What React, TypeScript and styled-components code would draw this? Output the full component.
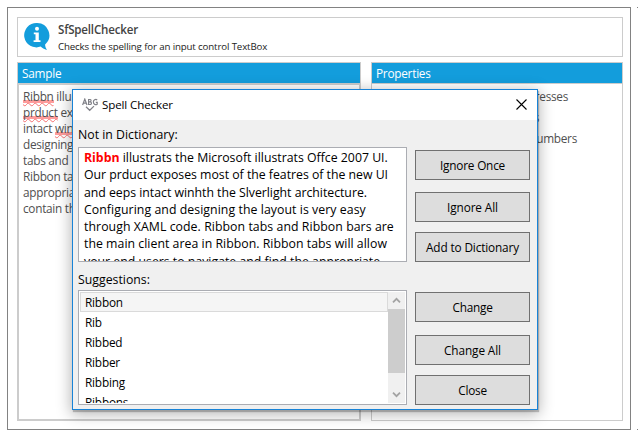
import React from 'react';
import styled, { createGlobalStyle } from 'styled-components';

const GlobalStyle = createGlobalStyle`
  * { box-sizing: border-box; }
  body { margin: 0; background: #fff; overflow: hidden; font-family: "Open Sans", "Noto Sans", sans-serif; }
`;

const Stage = styled.div`
  position: relative;
  width: 638px;
  height: 435px;
  padding: 7px 0 5px 7px;
  display: flex;
  gap: 6px;
  overflow: hidden;
`;

const AppWindow = styled.main`
  flex: none;
  width: 624px;
  height: 423px;
  border: 1px solid #828282;
  padding: 9px 7px 8px 9px;
  display: flex;
  flex-direction: column;
  gap: 5px;
`;

const NextWindow = styled.div`
  flex: 1;
  height: 423px;
  border: solid #828282;
  border-width: 1px 0;
`;

const Intro = styled.header`
  height: 40px;
  border: 1px solid #ccc;
  display: flex;
  padding: 4px 0 0 6px;
`;

const IntroText = styled.div`
  padding: 0 0 0 8px;
`;

const InfoIcon = styled.svg`
  width: 26px;
  height: 29px;
  flex: none;
`;

const Heading = styled.h1`
  margin: 0;
  font-size: 11.6px;
  line-height: 16px;
  font-weight: 600;
  letter-spacing: -0.2px;
  color: #444;
`;

const Caption = styled.p`
  margin: 1px 0 0;
  font-size: 9.7px;
  line-height: 15px;
  letter-spacing: -0.13px;
  color: #222;
`;

const Columns = styled.div`
  flex: 1;
  display: flex;
  gap: 10px;
`;

const Panel = styled.section<{ $width: number }>`
  width: ${p => p.$width}px;
  display: flex;
  flex-direction: column;
`;

const PanelTitle = styled.h2`
  margin: 0;
  height: 21px;
  border: 1px solid #ccc;
  border-bottom: 0;
  background: #139ddc;
  color: #fff;
  padding-left: 4px;
  font-size: 11.8px;
  font-weight: 400;
  line-height: 20px;
  letter-spacing: -0.25px;
`;

const PanelBody = styled.div<{ $edge: number }>`
  flex: 1;
  border: ${p => p.$edge}px solid #ccc;
  padding: ${p => (p.$edge === 2 ? 3 : 4)}px 4px;
  color: #505050;
  font-size: 11.8px;
  letter-spacing: -0.28px;
  line-height: 16px;
  white-space: pre;
`;

const Misspelt = styled.span`
  background: linear-gradient(#ff9c9c, #ff9c9c) 0 calc(100% - 1px) / 100% 3px no-repeat;
  text-decoration: underline wavy #f47070 1px;
  text-underline-offset: 1px;
  text-decoration-skip-ink: none;
`;

const BodyLine = styled.div`
  width: 51px;
`;

const OptionRow = styled.div`
  width: 206px;
  height: 21px;
  text-align: right;
`;

const OptionText = styled.span<{ $inset: number }>`
  margin-right: ${p => p.$inset}px;
`;

const Dialog = styled.div`
  position: absolute;
  left: 72px;
  top: 89px;
  width: 466px;
  height: 321px;
  border: 1px solid #1883d7;
  background: #f0f0f0;
  color: #000;
  box-shadow: 1px 2px 1px rgba(0, 0, 0, 0.22), 0 3px 14px 1px rgba(0, 0, 0, 0.3);
  display: flex;
  flex-direction: column;
`;

const TitleBar = styled.div`
  height: 30px;
  background: #fff;
  display: flex;
  align-items: center;
  padding: 0 10px 0 9px;
`;

const SpellIcon = styled.svg`
  width: 16px;
  height: 14px;
  margin: 0 4px 0 0;
`;

const Title = styled.span`
  flex: 1;
  margin-top: -1px;
  font-size: 11.6px;
  letter-spacing: -0.13px;
`;

const CloseIcon = styled.svg`
  width: 11px;
  height: 11px;
  margin-top: -2px;
`;

const DialogBody = styled.div`
  display: flex;
  gap: 8px;
  padding: 0 0 0 5px;
`;

const Fields = styled.div`
  width: 329px;
`;

const Label = styled.div<{ $height: number; $top: number }>`
  height: ${p => p.$height}px;
  padding-top: ${p => p.$top}px;
  line-height: 17px;
  font-size: 12.3px;
  white-space: nowrap;
`;

const TextArea = styled.div`
  height: 115px;
  border: 1px solid #abadb3;
  background: #fff;
  padding: 1px 5px 0;
  overflow: hidden;
`;

const TextLine = styled.div<{ $spacing: number }>`
  font-size: 12.3px;
  line-height: 17px;
  height: 17.25px;
  letter-spacing: ${p => p.$spacing}px;
  white-space: nowrap;
`;

const ErrorWord = styled.b`
  color: #f00;
  font-size: 12.3px;
`;

const SuggestionBox = styled.div`
  height: 115px;
  border: 1px solid #abadb3;
  background: #fff;
  padding: 1px;
  display: flex;
`;

const SuggestionList = styled.div`
  flex: 1;
  overflow: hidden;
`;

const Suggestion = styled.div<{ $selected?: boolean }>`
  height: ${p => (p.$selected ? 20 : 19.9)}px;
  padding-left: 4px;
  border: 1px solid ${p => (p.$selected ? '#dadada' : 'transparent')};
  background: ${p => (p.$selected ? '#f5f5f5' : 'transparent')};
  font-size: 11.8px;
  letter-spacing: -0.2px;
  line-height: 18px;
`;

const ScrollBar = styled.div`
  width: 17px;
  background: #f0f0f0;
  display: flex;
  flex-direction: column;
`;

const ScrollArrow = styled.svg`
  width: 17px;
  height: 17px;
`;

const ScrollThumb = styled.div`
  height: 64px;
  margin-bottom: auto;
  background: #cdcdcd;
`;

const Actions = styled.div`
  width: 115px;
  padding-top: 30px;
  display: flex;
  flex-direction: column;
`;

const ActionButton = styled.button<{ $after: number; $spacing: number }>`
  flex: none;
  height: 30px;
  margin: 0 0 ${p => p.$after}px;
  padding: 0;
  border: 1px solid #707070;
  background: #ddd;
  color: #000;
  font-family: inherit;
  font-size: 11.8px;
  letter-spacing: ${p => p.$spacing}px;
  line-height: 28px;
`;

const textLines: [string, number][] = [
  ['Our prduct exposes most of the featres of the new UI', -0.02],
  ['and eeps intact winhth the Slverlight architecture.', -0.025],
  ['Configuring and designing the layout is very easy', 0.06],
  ['through XAML code. Ribbon tabs and Ribbon bars are', 0.06],
  ['the main client area in Ribbon. Ribbon tabs will allow', 0.025],
  ['your end users to navigate and find the appropriate', 0],
];

const suggestions = ['Ribbon', 'Rib', 'Ribbed', 'Ribber', 'Ribbing', 'Ribbons'];

const actions: [string, number, number][] = [
  ['Ignore Once', 12, -0.2],
  ['Ignore All', 10, -0.1],
  ['Add to Dictionary', 30, -0.14],
  ['Change', 13, -0.24],
  ['Change All', 10, -0.1],
  ['Close', 0, -0.24],
];

export default function App() {
  return (
    <>
      <GlobalStyle />
      <Stage>
        <AppWindow>
          <Intro>
            <InfoIcon viewBox="0 0 26 29">
              <path d="M12.7 1a12.2 12.2 0 1 0 4 23.6c1.3 1.3 3.5 2.7 6.3 3.3-1.3-1.9-1.9-3.7-1.9-5.5A12.2 12.2 0 0 0 12.7 1z" fill="#139ddc" />
              <circle cx="13" cy="6.7" r="2" fill="#fff" />
              <path d="M9.8 10.5h5v7.7h1.7v1.8H9.6v-1.8h1.9v-5.9H9.8z" fill="#fff" />
            </InfoIcon>
            <IntroText>
              <Heading>SfSpellChecker</Heading>
              <Caption>Checks the spelling for an input control TextBox</Caption>
            </IntroText>
          </Intro>
          <Columns>
            <Panel $width={344}>
              <PanelTitle>Sample</PanelTitle>
              <PanelBody $edge={2}>
                <BodyLine><Misspelt>Ribbn</Misspelt> illu</BodyLine>
                <BodyLine><Misspelt>prduct</Misspelt> ex</BodyLine>
                <BodyLine>intact <Misspelt>win</Misspelt></BodyLine>
                <BodyLine>designing</BodyLine>
                <BodyLine>tabs and</BodyLine>
                <BodyLine>Ribbon ta</BodyLine>
                <BodyLine>appropria</BodyLine>
                <BodyLine>contain th</BodyLine>
              </PanelBody>
            </Panel>
            <Panel $width={252}>
              <PanelTitle>Properties</PanelTitle>
              <PanelBody $edge={1}>
                <OptionRow><OptionText $inset={14}>Ignore Email Addresses</OptionText></OptionRow>
                <OptionRow><OptionText $inset={43}>Ignore URLs</OptionText></OptionRow>
                <OptionRow><OptionText $inset={5}>Ignore Words With Numbers</OptionText></OptionRow>
              </PanelBody>
            </Panel>
          </Columns>
        </AppWindow>
        <NextWindow />
        <Dialog>
          <TitleBar>
            <SpellIcon viewBox="0 0 16 14" fill="none" stroke="#808188" strokeWidth="1.2">
              <path d="M.6 7 2.8 1.1 5 7M1.3 5.1h3M6.6 1.5v5h1.8a1.4 1.4 0 0 0 0-2.7H6.6h1.6a1.2 1.2 0 0 0 0-2.3zM15.2 1.9a2.4 2.4 0 0 0-3.8 2.1c0 2.4 2.2 3.2 3.8 2.2V4.3h-1.4M4 8.8l3.7 3.5 4.3-4.2" />
            </SpellIcon>
            <Title>Spell Checker</Title>
            <CloseIcon viewBox="0 0 11 11" stroke="#000" strokeWidth="1.1">
              <path d="M.5.5l10 10M10.5.5l-10 10" />
            </CloseIcon>
          </TitleBar>
          <DialogBody>
            <Fields>
              <Label $height={27} $top={6}>Not in Dictionary:</Label>
              <TextArea>
                <TextLine $spacing={0}><ErrorWord>Ribbn</ErrorWord> illustrats the Microsoft illustrats Offce 2007 UI.</TextLine>
                {textLines.map(([text, spacing]) => (
                  <TextLine key={text} $spacing={spacing}>{text}</TextLine>
                ))}
              </TextArea>
              <Label $height={28} $top={9}>Suggestions:</Label>
              <SuggestionBox>
                <SuggestionList>
                  {suggestions.map((word, i) => (
                    <Suggestion key={word} $selected={i === 0}>{word}</Suggestion>
                  ))}
                </SuggestionList>
                <ScrollBar>
                  <ScrollArrow viewBox="0 0 17 17" fill="none" stroke="#a3a3a3" strokeWidth="1.8">
                    <path d="M5 10.3l3.5-3.5 3.5 3.5" />
                  </ScrollArrow>
                  <ScrollThumb />
                  <ScrollArrow viewBox="0 0 17 17" fill="none" stroke="#a3a3a3" strokeWidth="1.8">
                    <path d="M5 6.7l3.5 3.5 3.5-3.5" />
                  </ScrollArrow>
                </ScrollBar>
              </SuggestionBox>
            </Fields>
            <Actions>
              {actions.map(([label, after, spacing]) => (
                <ActionButton key={label} $after={after} $spacing={spacing}>{label}</ActionButton>
              ))}
            </Actions>
          </DialogBody>
        </Dialog>
      </Stage>
    </>
  );
}
